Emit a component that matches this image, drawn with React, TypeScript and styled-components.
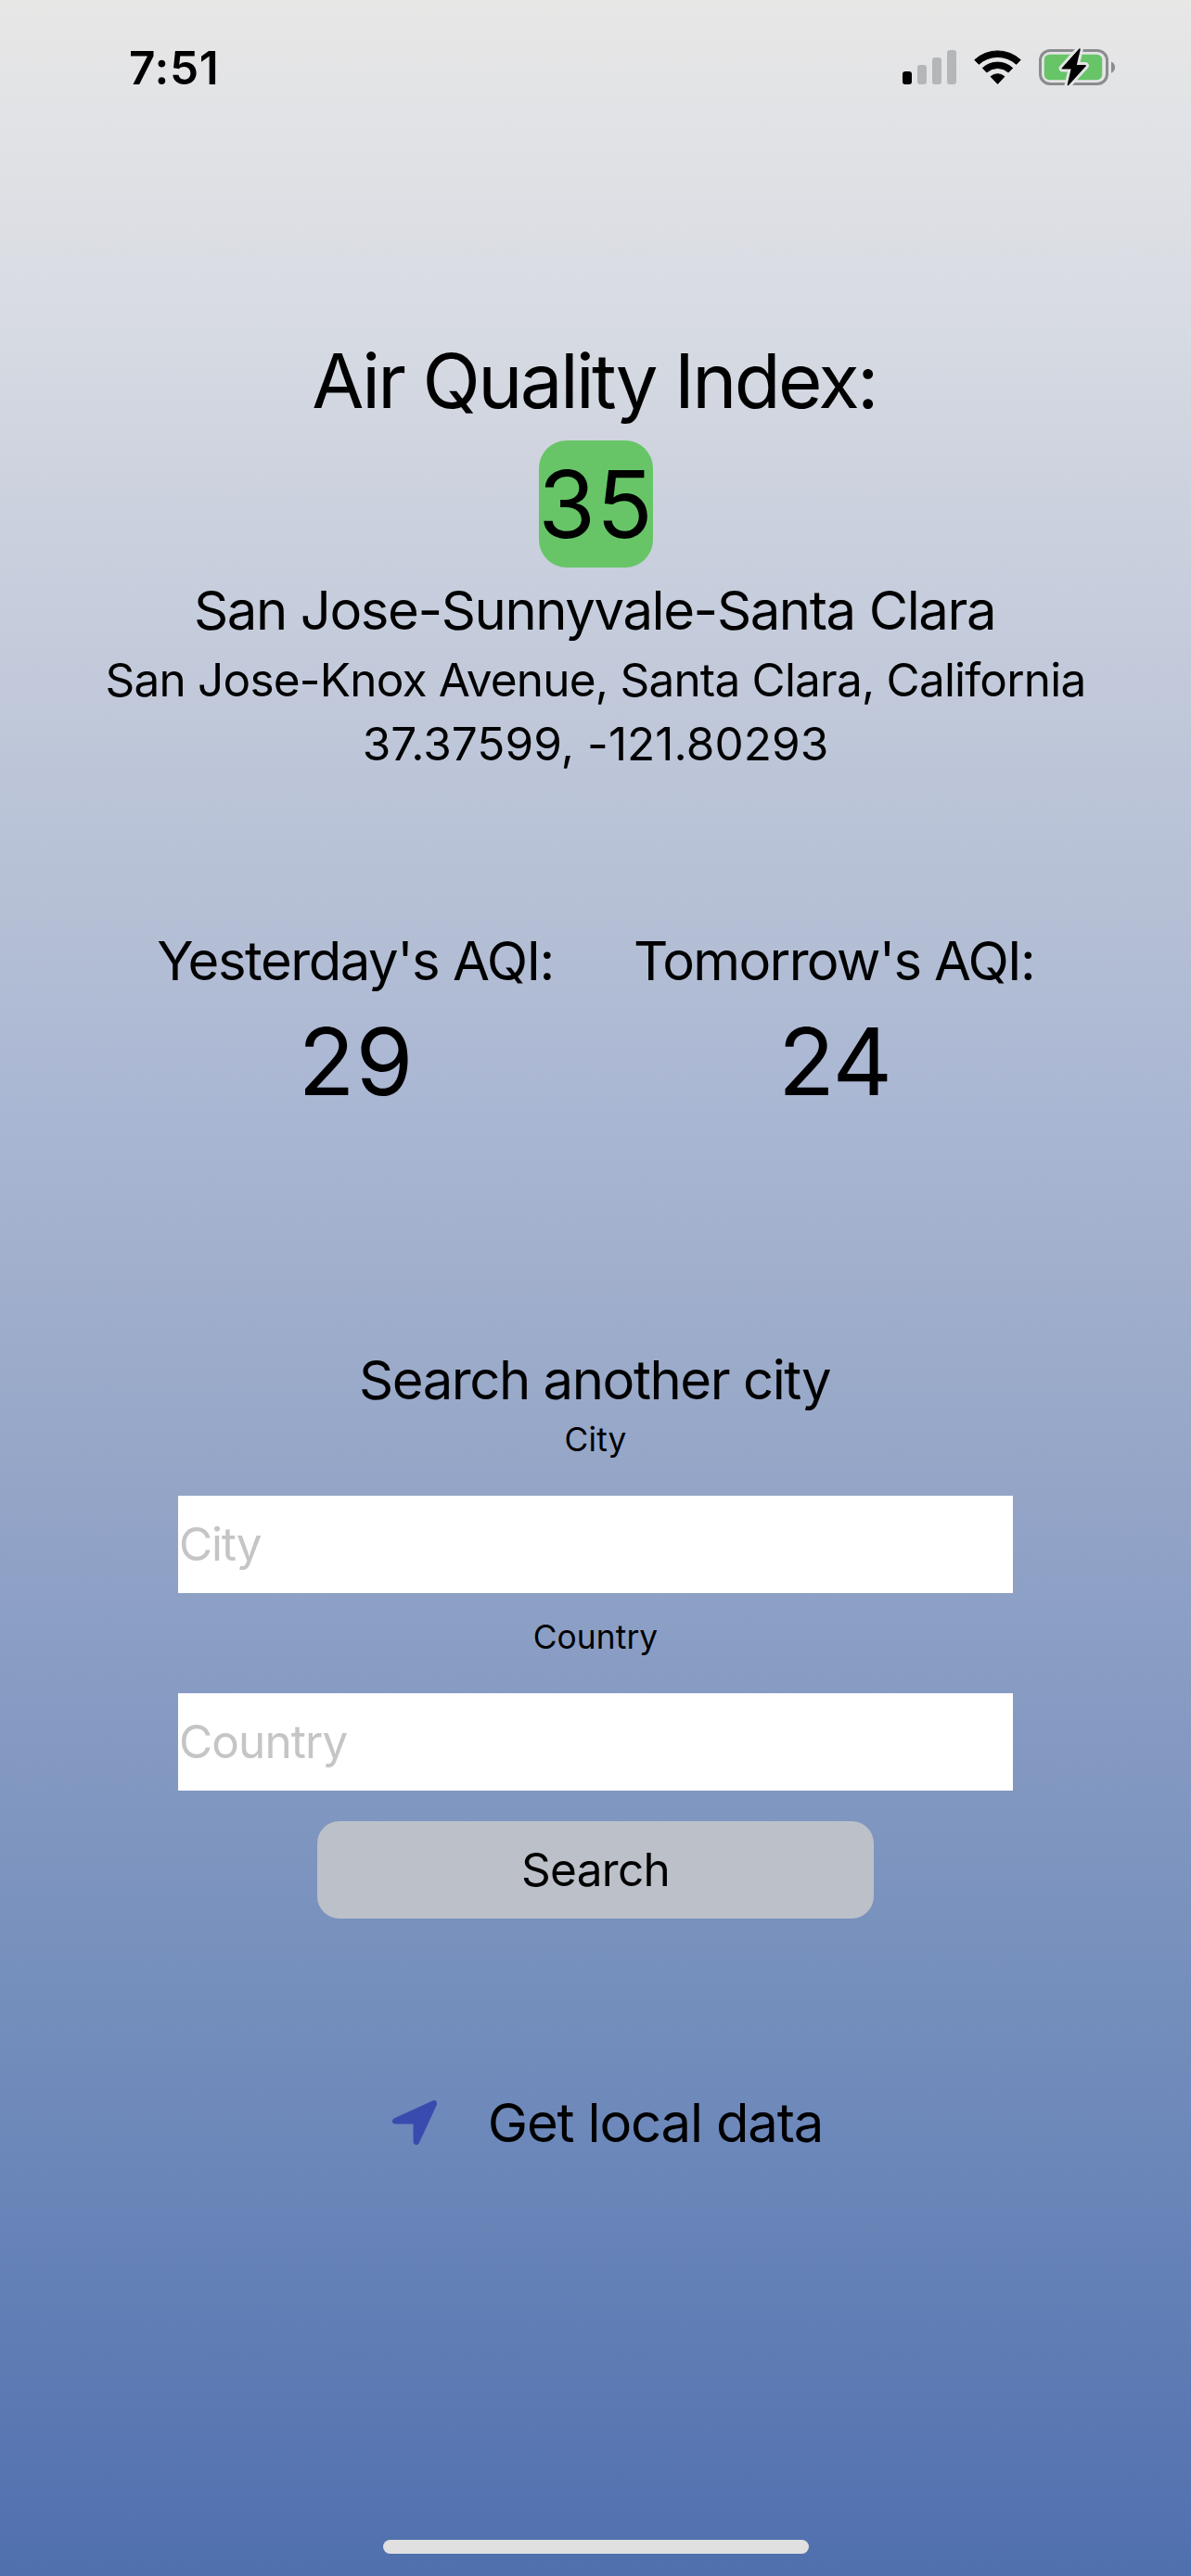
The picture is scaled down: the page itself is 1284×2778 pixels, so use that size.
import React from "react";
import styled, { createGlobalStyle } from "styled-components";

const GlobalStyle = createGlobalStyle`
  *, *::before, *::after { box-sizing: border-box; }
  body { margin: 0; }
`;

const Screen = styled.div`
  display: flex;
  flex-direction: column;
  width: 1284px;
  height: 2778px;
  padding: 43px 0 24px;
  overflow: hidden;
  color: #000;
  font-family: Inter, "Liberation Sans", sans-serif;
  font-weight: 400;
  background: linear-gradient(
    180deg,
    #e7e7e6 0px,
    #e2e3e6 120px,
    #d6dae2 370px,
    #ced3df 500px,
    #bcc5d8 840px,
    #b4bfd5 1000px,
    #a9b6d3 1210px,
    #9dacca 1440px,
    #8c9fc5 1740px,
    #7891bd 2090px,
    #6a86b9 2350px,
    #5573b0 2700px,
    #4f70ad 2778px
  );
`;

const StatusBar = styled.header`
  display: flex;
  justify-content: space-between;
  height: 60px;
  padding: 0 80px 0 139px;
`;

const Clock = styled.span`
  font-size: 49.5px;
  font-weight: 600;
  line-height: 60px;
  letter-spacing: 0.7px;
`;

const StatusIcons = styled.div`
  display: flex;
  gap: 19px;

  svg {
    display: block;
    height: 60px;
  }
`;

const Content = styled.main`
  display: flex;
  flex: 1;
  flex-direction: column;
  align-items: center;
  padding-top: 258px;
`;

const Stack = styled.section<{ $top?: number }>`
  display: flex;
  flex-direction: column;
  align-items: center;
  width: 1200px;
  margin-top: ${(p) => p.$top ?? 0}px;
`;

const Title = styled.h1`
  margin: 0 3px 0 0;
  font-size: 81.5px;
  font-weight: 400;
  line-height: 100px;
  letter-spacing: -2.65px;
  white-space: nowrap;
`;

const AqiBadge = styled.div`
  display: flex;
  align-items: center;
  justify-content: center;
  width: 123px;
  height: 137px;
  margin: 14px 0 10px 1px;
  border-radius: 30px;
  background: #67c567;
  font-size: 100px;
  letter-spacing: 1px;
`;

const Heading = styled.h2<{ $spacing: number }>`
  margin: 0 2px 0 0;
  font-size: 58px;
  font-weight: 400;
  line-height: 72px;
  letter-spacing: ${(p) => p.$spacing}px;
  white-space: nowrap;
`;

const Detail = styled.p<{ $spacing: number }>`
  margin: 9px 0 0;
  font-size: 49.5px;
  line-height: 60px;
  letter-spacing: ${(p) => p.$spacing}px;
  white-space: nowrap;
`;

const Forecasts = styled.section`
  display: flex;
  gap: 86px;
  margin-top: 168px;
`;

const Forecast = styled.div`
  display: flex;
  flex-direction: column;
  align-items: center;
  width: 430px;
`;

const ForecastValue = styled.div<{ $spacing: number }>`
  margin-top: 13px;
  font-size: 100px;
  line-height: 120px;
  letter-spacing: ${(p) => p.$spacing}px;
`;

const FieldLabel = styled.label<{ $top: number }>`
  margin: ${(p) => p.$top}px 0 39px;
  font-size: 35.3px;
  line-height: 42px;
  letter-spacing: 0.1px;
`;

const Field = styled.input<{ $spacing: number }>`
  width: 900px;
  height: 105px;
  padding: 0 0 2px 1px;
  border: 0;
  border-radius: 0;
  background: #fff;
  font-family: inherit;
  font-size: 49.5px;
  letter-spacing: ${(p) => p.$spacing}px;

  &::placeholder {
    color: #c5c5c7;
    opacity: 1;
  }
`;

const SearchButton = styled.button`
  width: 600px;
  height: 105px;
  margin-top: 33px;
  padding: 0 0 2px;
  border: 0;
  border-radius: 24px;
  background: #bcc0c8;
  color: #000;
  font-family: inherit;
  font-size: 49.5px;
  letter-spacing: -0.7px;
`;

const LocalButton = styled.button`
  display: flex;
  align-items: center;
  gap: 55px;
  margin: 184px 0 0 26px;
  padding: 0;
  border: 0;
  background: none;
  color: #000;
  font-family: inherit;
  font-size: 58px;
  line-height: 72px;
  letter-spacing: -1.17px;
`;

const HomeIndicator = styled.div`
  align-self: center;
  width: 459px;
  height: 15px;
  border-radius: 7.5px;
  background: #e0e0e0;
`;

const SignalIcon = () => (
  <svg width="58" viewBox="0 0 58 60">
    <rect x="0" y="34" width="10" height="14" rx="3" fill="#000" />
    <g fill="#b5b6b8">
      <rect x="16" y="27" width="10" height="21" rx="3" />
      <rect x="32" y="19" width="10" height="29" rx="3" />
      <rect x="48" y="11" width="10" height="37" rx="3" />
    </g>
  </svg>
);

const WifiIcon = () => (
  <svg width="51" viewBox="0 0 51 60" stroke="#000" strokeWidth="1" strokeLinejoin="round">
    <path d="M.8 21.6A36.3 36.3 0 0 1 50.2 21.6L45.7 26.3A29.8 29.8 0 0 0 5.3 26.3Z" />
    <path d="M9.3 30.4A24 24 0 0 1 41.7 30.4L37.2 35A17.4 17.4 0 0 0 13.8 35Z" />
    <path d="M18.1 39.6A11 11 0 0 1 32.9 39.6L25.5 47.4Z" />
  </svg>
);

const BatteryIcon = () => (
  <svg width="84" viewBox="0 0 84 60">
    <rect x="1.5" y="11.5" width="72" height="36" rx="10.6" fill="none" stroke="#8b8c8e" strokeWidth="3" />
    <path d="M78 23.4C80.5 24.3 82 26.5 82 29.5S80.5 34.7 78 35.7Z" fill="#8b8c8e" />
    <rect x="5.8" y="15.7" width="62.4" height="27.5" rx="5.5" fill="#67c567" />
    <path
      d="M43.4 9.6L24.6 30.4Q24.2 31.4 25.2 31.5H34.6L30.6 48.6Q31 49.8 32 49L50.8 28.2Q51.3 27.2 50.2 27H40.8L44.8 10.3Q44.4 8.8 43.4 9.6Z"
      fill="#000"
      stroke="#e3e4e6"
      strokeWidth="6"
      strokeLinejoin="round"
      paintOrder="stroke"
    />
  </svg>
);

const LocationArrow = () => (
  <svg width="48" height="48" viewBox="0 0 48 48" fill="#394bae">
    <path d="M1.8 19.6L43.4.4C46.6-.8 49.2 1.8 47.9 4.8L28.8 46.1C27.2 49.4 22.6 48.4 22.6 44.8L22.5 25.6L3.2 25.4C-.6 25.3-1.2 21 1.8 19.6Z" />
  </svg>
);

export default function App() {
  return (
    <>
      <GlobalStyle />
      <Screen>
        <StatusBar>
          <Clock>7:51</Clock>
          <StatusIcons>
            <SignalIcon />
            <WifiIcon />
            <BatteryIcon />
          </StatusIcons>
        </StatusBar>
        <Content>
          <Stack>
            <Title>Air Quality Index:</Title>
            <AqiBadge>35</AqiBadge>
            <Heading $spacing={-1.4}>San Jose-Sunnyvale-Santa Clara</Heading>
            <Detail $spacing={-0.8}>San Jose-Knox Avenue, Santa Clara, California</Detail>
            <Detail $spacing={0.06}>37.37599, -121.80293</Detail>
          </Stack>
          <Forecasts>
            <Forecast>
              <Heading $spacing={-1.47}>Yesterday's AQI:</Heading>
              <ForecastValue $spacing={1}>29</ForecastValue>
            </Forecast>
            <Forecast>
              <Heading $spacing={-1.67}>Tomorrow's AQI:</Heading>
              <ForecastValue $spacing={-1}>24</ForecastValue>
            </Forecast>
          </Forecasts>
          <Stack $top={247}>
            <Heading $spacing={-1.44}>Search another city</Heading>
            <FieldLabel $top={8} htmlFor="city">City</FieldLabel>
            <Field $spacing={-1.2} id="city" placeholder="City" />
            <FieldLabel $top={27} htmlFor="country">Country</FieldLabel>
            <Field $spacing={-0.9} id="country" placeholder="Country" />
            <SearchButton>Search</SearchButton>
          </Stack>
          <LocalButton>
            <LocationArrow />
            Get local data
          </LocalButton>
        </Content>
        <HomeIndicator />
      </Screen>
    </>
  );
}
